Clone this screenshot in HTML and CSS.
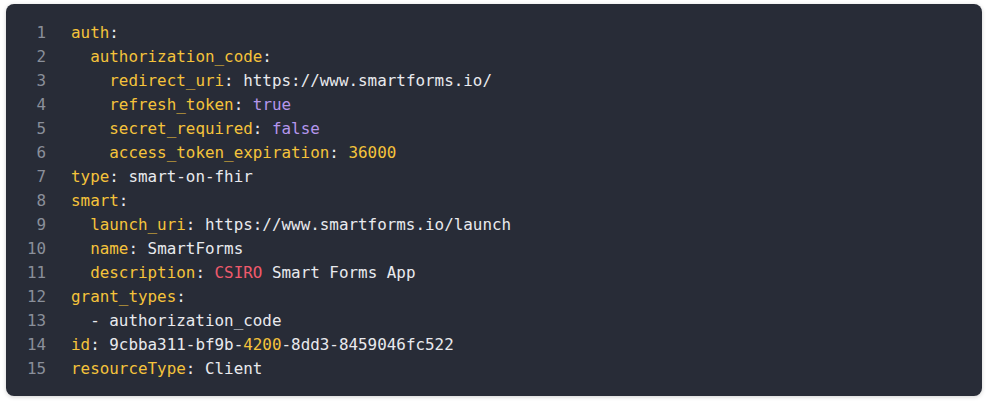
FILE: index.html
```html
<!DOCTYPE html>
<html>
<head>
<meta charset="utf-8">
<link rel="stylesheet" href="styles.css">
</head>
<body>
<div class="card">
<div class="code">
<div class="line"><span class="num">1</span><span class="src"><span class="k">auth</span><span class="p">:</span></span></div>
<div class="line"><span class="num">2</span><span class="src">  <span class="k">authorization_code</span><span class="p">:</span></span></div>
<div class="line"><span class="num">3</span><span class="src">    <span class="k">redirect_uri</span><span class="p">:</span> https://www.smartforms.io/</span></div>
<div class="line"><span class="num">4</span><span class="src">    <span class="k">refresh_token</span><span class="p">:</span> <span class="b">true</span></span></div>
<div class="line"><span class="num">5</span><span class="src">    <span class="k">secret_required</span><span class="p">:</span> <span class="b">false</span></span></div>
<div class="line"><span class="num">6</span><span class="src">    <span class="k">access_token_expiration</span><span class="p">:</span> <span class="n">36000</span></span></div>
<div class="line"><span class="num">7</span><span class="src"><span class="k">type</span><span class="p">:</span> smart-on-fhir</span></div>
<div class="line"><span class="num">8</span><span class="src"><span class="k">smart</span><span class="p">:</span></span></div>
<div class="line"><span class="num">9</span><span class="src">  <span class="k">launch_uri</span><span class="p">:</span> https://www.smartforms.io/launch</span></div>
<div class="line"><span class="num">10</span><span class="src">  <span class="k">name</span><span class="p">:</span> SmartForms</span></div>
<div class="line"><span class="num">11</span><span class="src">  <span class="k">description</span><span class="p">:</span> <span class="r">CSIRO</span> Smart Forms App</span></div>
<div class="line"><span class="num">12</span><span class="src"><span class="k">grant_types</span><span class="p">:</span></span></div>
<div class="line"><span class="num">13</span><span class="src">  - authorization_code</span></div>
<div class="line"><span class="num">14</span><span class="src"><span class="k">id</span><span class="p">:</span> 9cbba311-bf9b-<span class="n">4200</span>-8dd3-8459046fc522</span></div>
<div class="line"><span class="num">15</span><span class="src"><span class="k">resourceType</span><span class="p">:</span> Client</span></div>
</div>
</div>
</body>
</html>
```
FILE: styles.css
```css
html, body {
  margin: 0;
  padding: 0;
  background: #ffffff;
}
body {
  padding: 4px 6px 8px 6px;
}
.card {
  background: #282c37;
  border-radius: 8px;
  height: 392px;
  box-sizing: border-box;
  padding: 17px 20px 15px 21px;
  box-shadow: 0 1px 4px rgba(0, 0, 0, 0.18);
}
.code {
  font-family: "DejaVu Sans Mono", "Liberation Mono", monospace;
  font-size: 15.9px;
  line-height: 24px;
  color: #e9eaee;
}
.line {
  display: flex;
  white-space: pre;
  height: 24px;
}
.num {
  width: 19px;
  text-align: right;
  color: #8a8f9a;
  flex: none;
}
.src {
  margin-left: 25px;
}
.k { color: #f5c33b; }
.p { color: #e9eaee; }
.b { color: #b596ec; }
.n { color: #f5c33b; }
.r { color: #ef5a6c; }
```
